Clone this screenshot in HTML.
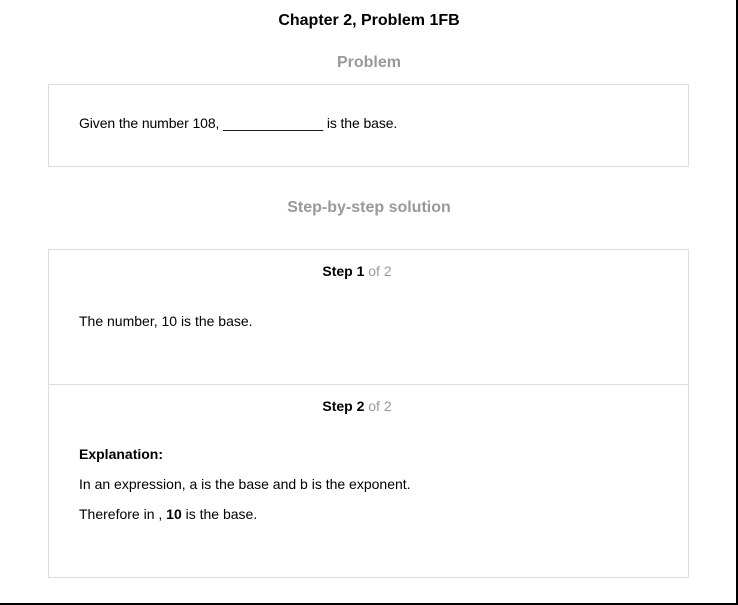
<!DOCTYPE html>
<html><head><style>
body{margin:0;width:738px;height:605px;position:relative;background:#fff;font-family:"Liberation Sans",Arial,sans-serif;color:#000;overflow:hidden}
.abs{position:absolute}
.box{position:absolute;left:48px;width:639px;border:1px solid #dcdcdc}
.t{position:absolute;font-size:14px;white-space:nowrap}
.c{left:0;width:738px;text-align:center}
.g{color:#999}
</style></head><body>
<div class="t c" style="top:12px;font-size:16px;font-weight:bold">Chapter 2, Problem 1FB</div>
<div class="t c g" style="top:54px;font-size:16px;font-weight:bold">Problem</div>
<div class="box" style="top:84px;height:81px"></div>
<div class="t" style="left:79px;top:115px;letter-spacing:-0.1px">Given the number 108, _____________ is the base.</div>
<div class="t c g" style="top:199px;font-size:16px;font-weight:bold">Step-by-step solution</div>
<div class="box" style="top:249px;height:327px"></div>
<div class="abs" style="left:49px;top:384px;width:639px;height:1px;background:#dcdcdc"></div>
<div class="t c" style="top:263px;font-size:14px;left:-12px"><b>Step 1</b> <span class="g">of 2</span></div>
<div class="t" style="left:79px;top:313px">The number, 10 is the base.</div>
<div class="t c" style="top:398px;font-size:14px;left:-12px"><b>Step 2</b> <span class="g">of 2</span></div>
<div class="t" style="left:79px;top:446px;font-weight:bold">Explanation:</div>
<div class="t" style="left:79px;top:476px">In an expression, a is the base and b is the exponent.</div>
<div class="t" style="left:79px;top:506px">Therefore in , <b>10</b> is the base.</div>
<div class="abs" style="left:736px;top:0;width:2px;height:605px;background:#000"></div>
<div class="abs" style="left:0;top:603px;width:738px;height:2px;background:#000"></div>
</body></html>
